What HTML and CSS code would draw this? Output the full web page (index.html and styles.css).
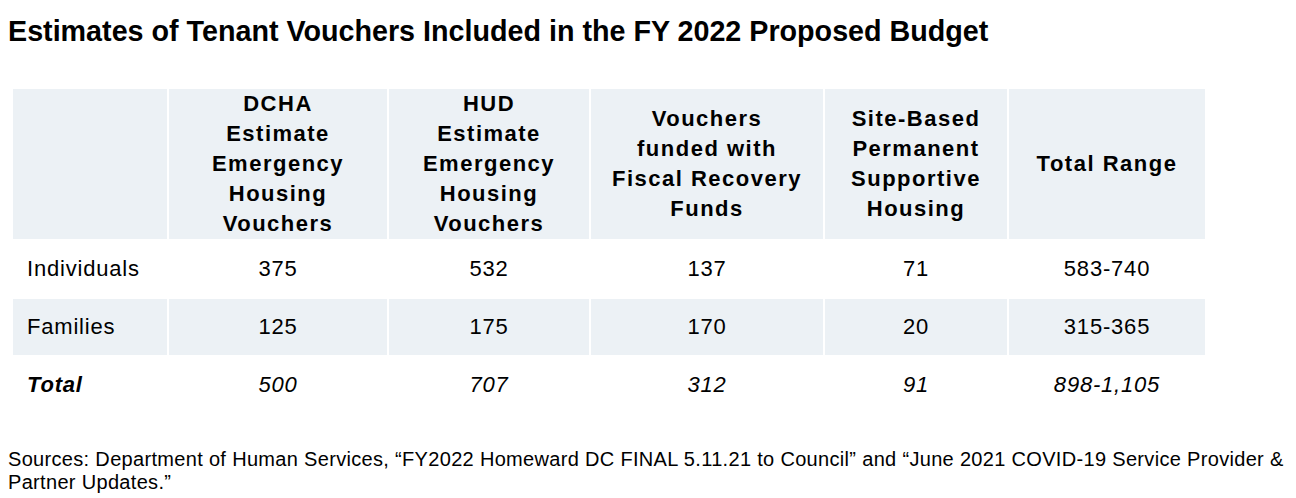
FILE: index.html
```html
<!DOCTYPE html>
<html lang="en">
<head>
<meta charset="utf-8">
<title>Estimates of Tenant Vouchers</title>
<link rel="stylesheet" href="styles.css">
</head>
<body>
<main class="page">
  <h1 class="title">Estimates of Tenant Vouchers Included in the FY 2022 Proposed Budget</h1>
  <table class="vouchers">
    <colgroup>
      <col class="c1"><col class="c2"><col class="c3"><col class="c4"><col class="c5"><col class="c6">
    </colgroup>
    <thead>
      <tr class="head">
        <th></th>
        <th>DCHA<br>Estimate<br>Emergency<br>Housing<br>Vouchers</th>
        <th>HUD<br>Estimate<br>Emergency<br>Housing<br>Vouchers</th>
        <th>Vouchers<br>funded with<br>Fiscal Recovery<br>Funds</th>
        <th>Site-Based<br>Permanent<br>Supportive<br>Housing</th>
        <th>Total Range</th>
      </tr>
    </thead>
    <tbody>
      <tr>
        <td class="label">Individuals</td><td>375</td><td>532</td><td>137</td><td>71</td><td>583-740</td>
      </tr>
      <tr class="shaded">
        <td class="label">Families</td><td>125</td><td>175</td><td>170</td><td>20</td><td>315-365</td>
      </tr>
      <tr class="total">
        <td class="label"><strong>Total</strong></td><td>500</td><td>707</td><td>312</td><td>91</td><td>898-1,105</td>
      </tr>
    </tbody>
  </table>
  <p class="sources">Sources: Department of Human Services, “FY2022 Homeward DC FINAL 5.11.21 to Council” and “June 2021 COVID-19 Service Provider &amp; Partner Updates.”</p>
</main>
</body>
</html>
```

FILE: styles.css
```css
html, body {
  margin: 0;
  padding: 0;
  background: #ffffff;
}

.page {
  padding: 0 8px;
  color: #000;
  font-family: "Liberation Sans", Arial, sans-serif;
}

.title {
  margin: 15px 0 0 0;
  font-size: 28.7px;
  line-height: 32px;
  font-weight: 700;
  color: #000;
}

.vouchers {
  margin: 40px 0 0 3px;
  border-collapse: separate;
  border-spacing: 2px;
  table-layout: fixed;
  width: 1196px;
}

.c1 { width: 154px; }
.c2 { width: 218px; }
.c3 { width: 200px; }
.c4 { width: 232px; }
.c5 { width: 182px; }
.c6 { width: 196px; }

.head th {
  background: #ecf1f5;
  height: 150px;
  padding: 0;
  font-size: 22px;
  line-height: 30px;
  font-weight: 700;
  letter-spacing: 1.5px;
  text-align: center;
  vertical-align: middle;
  color: #000;
}

.vouchers td {
  height: 56px;
  padding: 0;
  font-size: 22px;
  letter-spacing: 0.8px;
  text-align: center;
  vertical-align: middle;
  color: #000;
}

.vouchers td.label {
  text-align: left;
  padding-left: 14px;
}

.shaded td {
  background: #ecf1f5;
}

.total td {
  font-style: italic;
}

.total td strong {
  font-weight: 700;
}

.sources {
  margin: 33px 0 0 0;
  font-size: 20px;
  line-height: 23px;
  letter-spacing: 0.32px;
  color: #000;
}
```
